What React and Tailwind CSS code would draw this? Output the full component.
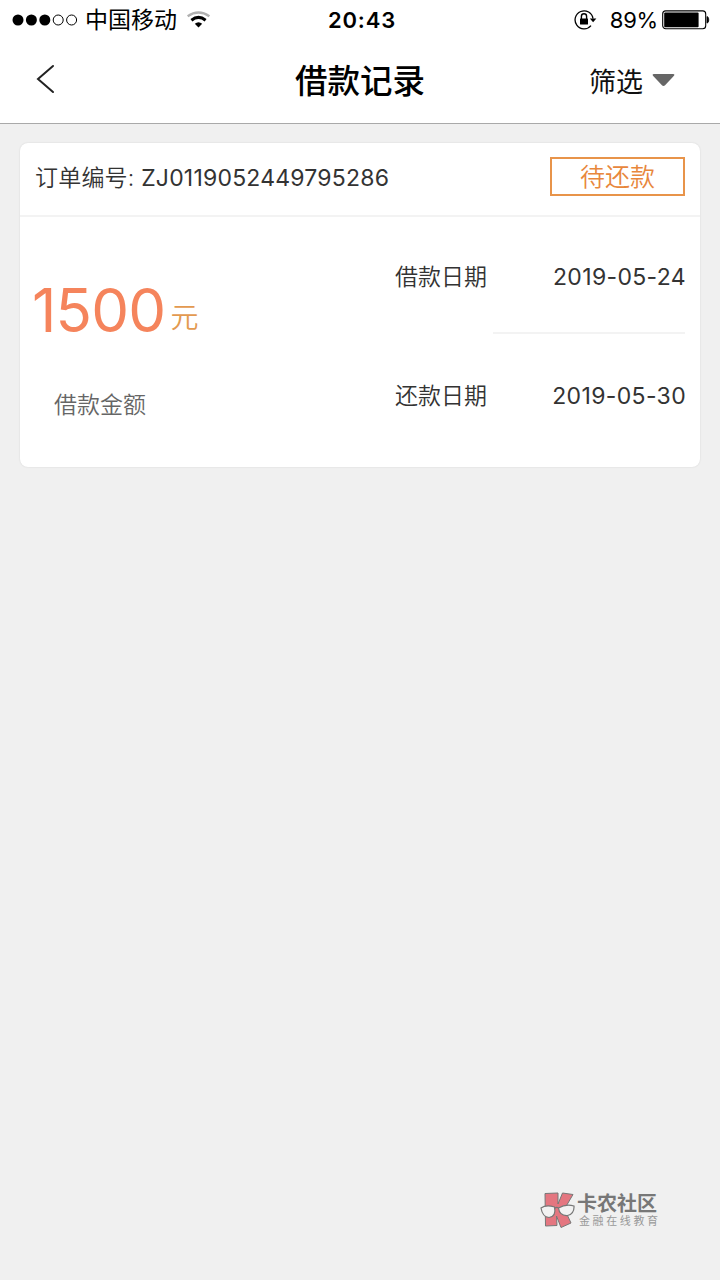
import { Fragment } from "react";

const order = {
  id: "ZJ0119052449795286",
  status: "待还款",
  amount: 1500,
  dates: [
    { label: "借款日期", value: "2019-05-24" },
    { label: "还款日期", value: "2019-05-30" },
  ],
};

function SignalDots() {
  return (
    <svg width="66" height="12" viewBox="0 0 66 12">
      <circle cx="6" cy="6" r="5.5" />
      <circle cx="19.4" cy="6" r="5.5" />
      <circle cx="32.8" cy="6" r="5.5" />
      <circle cx="46.2" cy="6" r="5" fill="none" stroke="#000" />
      <circle cx="59.6" cy="6" r="5" fill="none" stroke="#000" />
    </svg>
  );
}

function WifiIcon() {
  return (
    <svg width="24" height="18" viewBox="0 0 24 18" fill="none">
      <path d="M.6 5.2Q11.5-2.2 22.4 5.2" stroke="#b0b0b0" strokeWidth="2.4" />
      <path d="M4.4 9.2Q11.5 3.6 18.6 9.2" stroke="#000" strokeWidth="3" />
      <path d="M7.8 12.8Q11.5 9.6 15.2 12.8L11.5 16.6Z" fill="#000" />
    </svg>
  );
}

function RotationLockIcon() {
  return (
    <svg width="23" height="20" viewBox="0 0 23 20" fill="none" stroke="#000">
      <path d="M19 8.6A9 9 0 1 0 17 15.6" strokeWidth="1.3" />
      <path d="M15.8 8.4H22.4L19.1 12.2Z" fill="#000" stroke="none" />
      <path d="M7.4 9V6.4a2.6 2.6 0 0 1 5.2 0V9" strokeWidth="1.4" />
      <rect x="6" y="8.4" width="8" height="6.2" rx="0.6" fill="#000" stroke="none" />
    </svg>
  );
}

function BatteryIcon() {
  return (
    <svg width="48" height="20" viewBox="0 0 48 20">
      <rect x="0.7" y="0.9" width="43" height="17.8" rx="3" fill="none" stroke="#000" strokeWidth="1.1" />
      <rect x="2.2" y="2.4" width="34.4" height="14.8" rx="1" />
      <path d="M45 6.5c2.3.5 2.3 6.1 0 6.6z" stroke="#000" strokeWidth="0.8" />
    </svg>
  );
}

function StatusBar() {
  return (
    <div className="grid h-10 grid-cols-3 items-center text-black">
      <div className="flex items-center pl-3">
        <SignalDots />
        <span className="ml-[7px] text-[23px] leading-10">中国移动</span>
        <span className="ml-[10px]">
          <WifiIcon />
        </span>
      </div>
      <div className="pl-1 text-center text-[22px] font-semibold leading-10 tracking-[0.8px]">20:43</div>
      <div className="flex items-center justify-end pr-[10px]">
        <RotationLockIcon />
        <span className="ml-[13px] mr-1 text-[22px] leading-10 tracking-[-0.2px]">89%</span>
        <BatteryIcon />
      </div>
    </div>
  );
}

function Header() {
  return (
    <header className="grid h-[84px] grid-cols-3 items-center border-b border-[#a9a9a9] text-black">
      <button className="pb-[5px] pl-9 text-left">
        <svg width="20" height="30" viewBox="0 0 20 30" fill="none">
          <path d="M17 2L2 15L17 28" stroke="#222" strokeWidth="2" strokeLinecap="round" />
        </svg>
      </button>
      <h1 className="pt-px text-center text-[32.5px] font-medium leading-[80px]">借款记录</h1>
      <button className="flex items-center justify-end gap-[9px] pr-[45px] text-[27px] leading-[80px] text-[#111]">
        <span className="pt-0.5">筛选</span>
        <svg className="mb-[3px]" width="23" height="14" viewBox="0 0 23 14">
          <path d="M2 1H21Q23.5 1 21.5 3.2L13.3 12Q11.5 13.8 9.7 12L1.5 3.2Q-.5 1 2 1Z" fill="#666" />
        </svg>
      </button>
    </header>
  );
}

function OrderCard({ id, status, amount, dates }) {
  return (
    <section className="mx-5 mt-[19px] h-[324px] rounded-lg bg-white text-[23px] font-[350] text-[#333] shadow-[0_0_2px_rgba(0,0,0,0.12)]">
      <div className="flex h-[74px] items-center justify-between border-b-2 border-[#f3f3f3] pb-[5px] pl-[15px] pr-[15px]">
        <span className="pt-0.5 leading-[60px] tracking-[0.2px]">
          订单编号: <span className="font-normal">{id}</span>
        </span>
        <span className="flex h-[39px] w-[135px] items-center justify-center border-2 border-[#e8944a] pt-0.5 text-[25px] text-[#e8873c]">
          {status}
        </span>
      </div>

      <div className="flex h-[250px]">
        <div className="w-[375px] pl-3 pt-[58px]">
          <div className="flex items-start leading-[70px]">
            <span className="text-[60px] font-normal tracking-[-0.8px] text-[#f5845c]">{amount}</span>
            <span className="ml-[5px] pt-[8px] text-[28px] text-[#e39a50]">元</span>
          </div>
          <div className="mt-[32px] pl-[22px] leading-10 text-[#666]">借款金额</div>
        </div>
        <div className="flex-1 pr-[15px]">
          {dates.map((d, i) => (
            <Fragment key={d.label}>
              {i > 0 && <div className="-mt-0.5 mb-0.5 ml-[98px] h-0.5 bg-[#f3f3f3]" />}
              <div className="flex h-[117px] items-center justify-between pt-0.5 leading-[40px]">
                <span>{d.label}</span>
                <span className="-mr-px font-normal tracking-[0.35px]">{d.value}</span>
              </div>
            </Fragment>
          ))}
        </div>
      </div>
    </section>
  );
}

function BrandMark() {
  return (
    <svg width="35" height="38" viewBox="0 0 35 38" fill="none" stroke="#777">
      <path d="M5 2.5L18 2V13L22.5 2L33 3.5L24.5 18L31 32L21 36.5L16.5 25L17 34.5L5.5 35Z" fill="#e47680" strokeWidth="1" />
      <path d="M1 17Q6 13.5 14.5 16Q16.5 25.5 9 26.5Q2.5 26 1 17Z" fill="#f2f2f2" strokeWidth="1.2" />
      <path d="M18.5 17Q26 12.5 34 15Q34.5 23 27.5 24.5Q19.5 25 18.5 17Z" fill="#f2f2f2" strokeWidth="1.2" />
      <path d="M14.5 17.5Q16.5 15.5 18.5 17" strokeWidth="1.2" />
    </svg>
  );
}

function Brand() {
  return (
    <footer className="mb-[51px] mr-[60px] mt-auto flex items-center gap-[2px] self-end">
      <BrandMark />
      <div className="w-[83px] whitespace-nowrap">
        <div className="text-[20px] font-bold leading-[22px] text-[#777]">卡农社区</div>
        <div className="pl-[2px] text-[11px] leading-[13px] tracking-[2.6px] text-[#999]">金融在线教育</div>
      </div>
    </footer>
  );
}

export default function App() {
  return (
    <div className="flex min-h-[1280px] w-[720px] flex-col bg-[#f0f0f0] font-[Inter,'Noto_Sans_CJK_SC',sans-serif]">
      <div className="bg-white">
        <StatusBar />
        <Header />
      </div>
      <OrderCard {...order} />
      <Brand />
    </div>
  );
}
